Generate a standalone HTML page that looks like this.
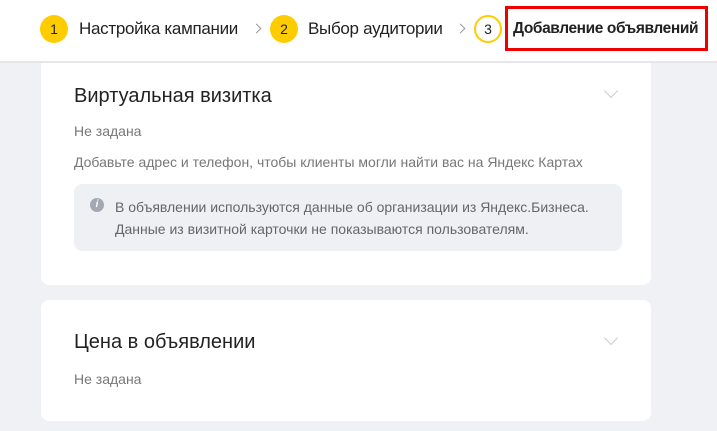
<!DOCTYPE html>
<html><head><meta charset="utf-8"><style>
body{margin:0;width:717px;height:431px;overflow:hidden;background:#eff1f4;font-family:"Liberation Sans",sans-serif;position:relative}
.hdr{position:absolute;left:0;top:0;width:717px;height:61px;background:#fff;border-bottom:2px solid #e4e6ea}
.c{position:absolute;top:15px;width:28px;height:28px;border-radius:50%;background:#fc0;font-size:14px;line-height:28px;text-align:center;color:#222;box-sizing:border-box}
.t{position:absolute;top:19px;font-size:17px;color:#222;white-space:nowrap;letter-spacing:-0.3px}
.ar{position:absolute;top:25px;width:6px;height:6px;border-right:1px solid #999;border-top:1px solid #999;transform:rotate(45deg)}
.box{position:absolute;left:505px;top:6px;width:203px;height:45px;border:3px solid #e00;box-sizing:border-box}
.card{position:absolute;left:41px;width:610px;background:#fff;border-radius:8px}
h2{position:absolute;left:33px;margin:0;font-size:20px;font-weight:normal;color:#222}
.s{position:absolute;left:33px;font-size:14px;color:#777;white-space:nowrap}
.chev{position:absolute;left:565px;width:9px;height:9px;border-right:1px solid #ccc;border-bottom:1px solid #ccc;transform:rotate(45deg)}
.info{position:absolute;left:33px;top:121px;width:548px;height:67px;background:#eef0f4;border-radius:8px}
.info i{position:absolute;left:16px;top:14px;width:14px;height:14px;border-radius:50%;background:#a3a8b3;color:#fff;font-size:10px;line-height:14px;text-align:center;font-style:italic;font-weight:bold}
.info p{position:absolute;left:41px;top:12px;margin:0;font-size:14px;line-height:22px;color:#666;white-space:nowrap}
</style></head><body>
<div class="hdr">
<div class="c" style="left:40px">1</div><div class="t" style="left:79px">Настройка кампании</div><div class="ar" style="left:253px"></div>
<div class="c" style="left:270px">2</div><div class="t" style="left:308px">Выбор аудитории</div><div class="ar" style="left:457px"></div>
<div class="c" style="left:474px;background:#fff;border:2px solid #fc0;line-height:24px">3</div>
<div class="t" style="left:513px;font-weight:bold;font-size:15.5px;top:20px;letter-spacing:-0.4px">Добавление объявлений</div>
<div class="box"></div>
</div>
<div class="card" style="top:63px;height:222px;border-radius:0 0 8px 8px">
<h2 style="top:22px">Виртуальная визитка</h2><div class="chev" style="top:23px"></div>
<div class="s" style="top:60px">Не задана</div>
<div class="s" style="top:91px">Добавьте адрес и телефон, чтобы клиенты могли найти вас на Яндекс Картах</div>
<div class="info"><i>i</i><p>В объявлении используются данные об организации из Яндекс.Бизнеса.<br>Данные из визитной карточки не показываются пользователям.</p></div>
</div>
<div class="card" style="top:300px;height:121px">
<h2 style="top:31px">Цена в объявлении</h2><div class="chev" style="top:33px"></div>
<div class="s" style="top:71px">Не задана</div>
</div>
</body></html>
